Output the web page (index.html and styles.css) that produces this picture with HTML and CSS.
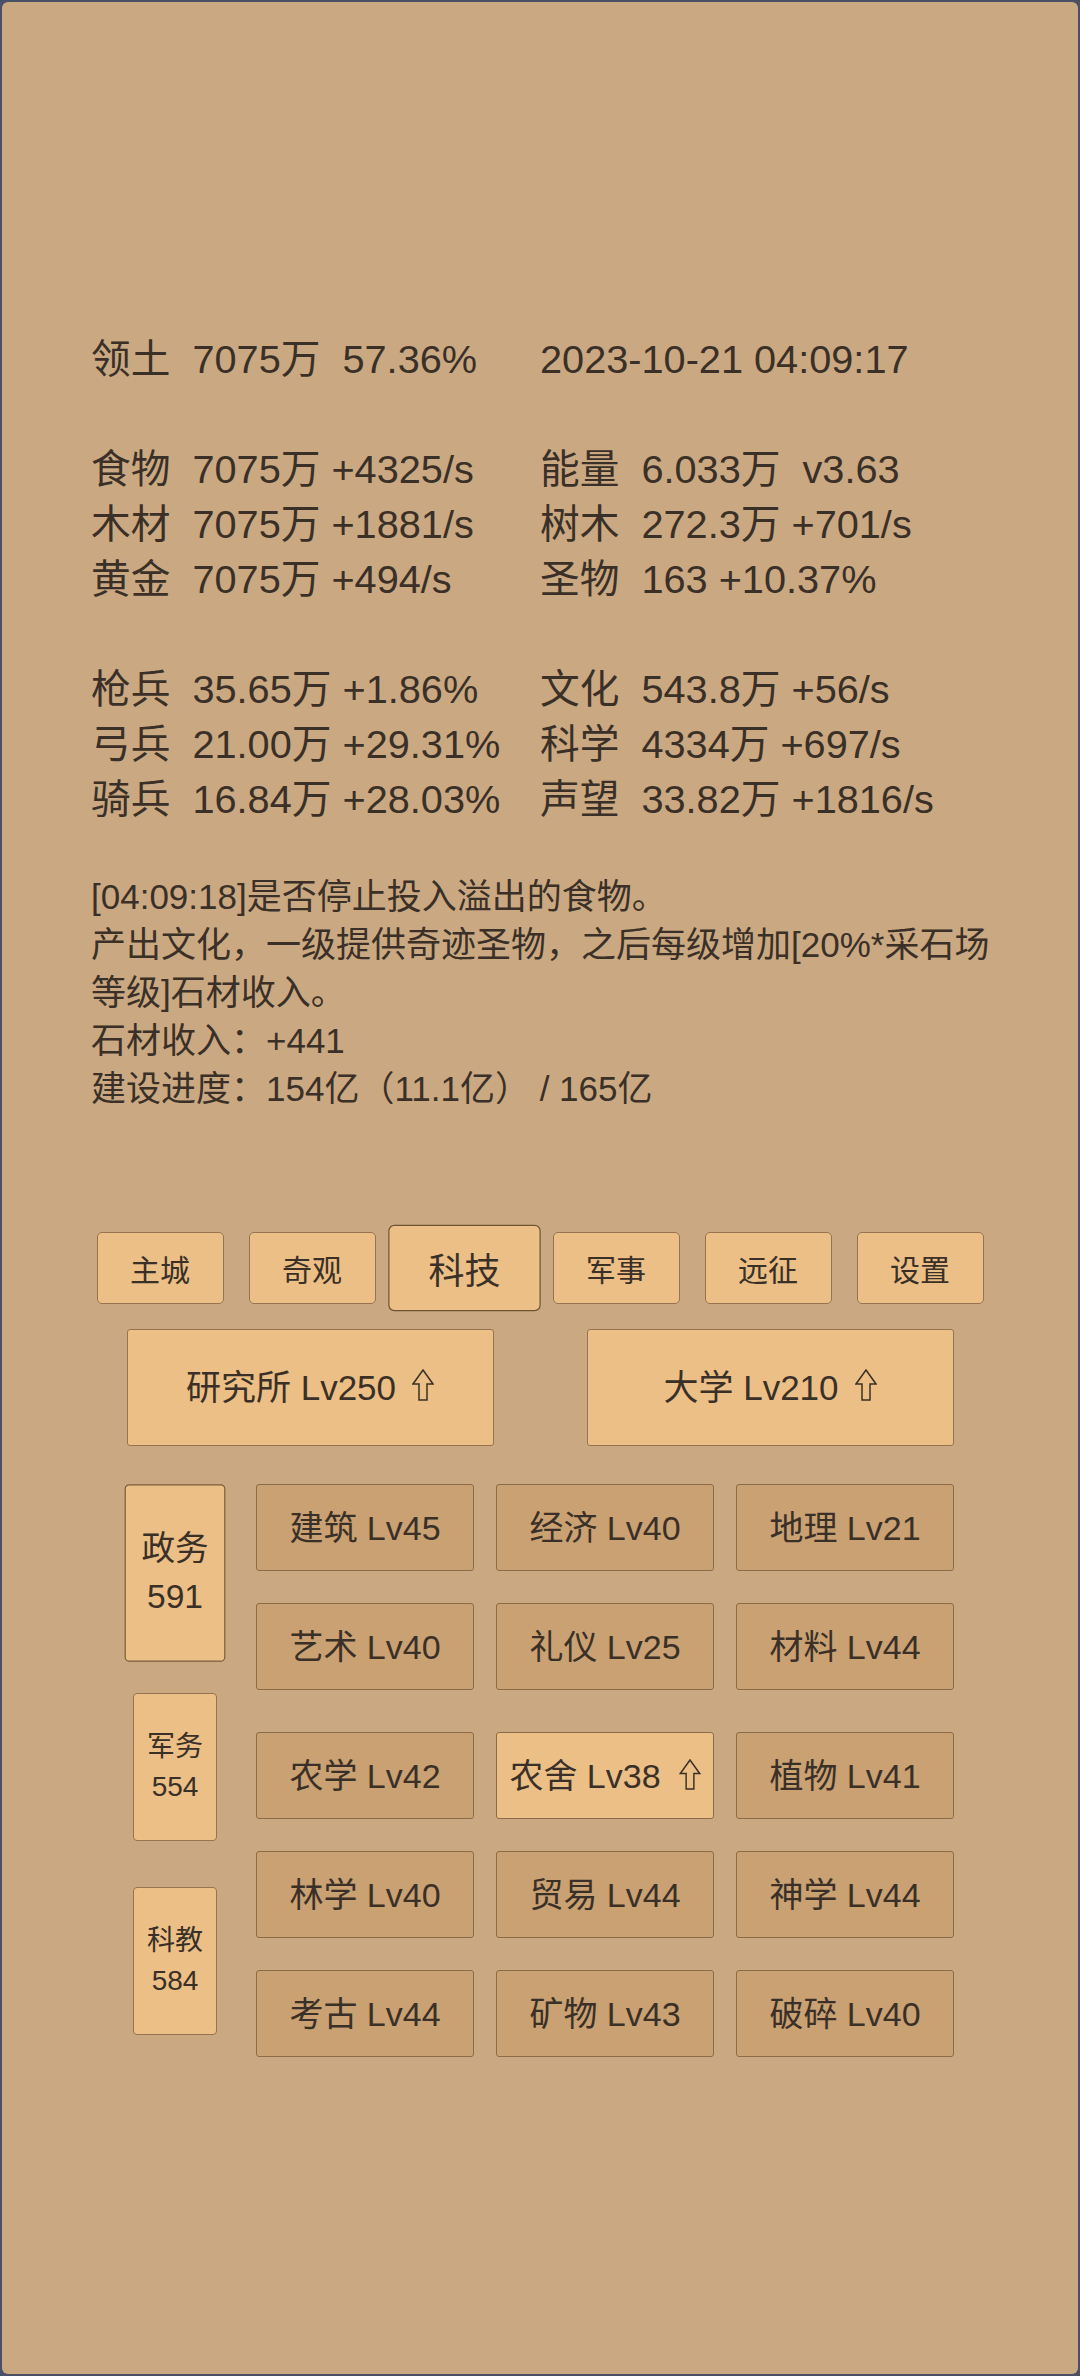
FILE: index.html
```html
<!DOCTYPE html>
<html lang="zh-CN">
<head>
<meta charset="utf-8">
<title>科技</title>
<link rel="stylesheet" href="styles.css">
</head>
<body>
<div class="app">
  <div class="content">
    <section class="stats">
      <div class="block">
        <div class="row"><span class="col">领土  7075万  57.36%</span><span class="col">2023-10-21 04:09:17</span></div>
      </div>
      <div class="block">
        <div class="row"><span class="col">食物  7075万 +4325/s</span><span class="col">能量  6.033万  v3.63</span></div>
        <div class="row"><span class="col">木材  7075万 +1881/s</span><span class="col">树木  272.3万 +701/s</span></div>
        <div class="row"><span class="col">黄金  7075万 +494/s</span><span class="col">圣物  163 +10.37%</span></div>
      </div>
      <div class="block">
        <div class="row"><span class="col">枪兵  35.65万 +1.86%</span><span class="col">文化  543.8万 +56/s</span></div>
        <div class="row"><span class="col">弓兵  21.00万 +29.31%</span><span class="col">科学  4334万 +697/s</span></div>
        <div class="row"><span class="col">骑兵  16.84万 +28.03%</span><span class="col">声望  33.82万 +1816/s</span></div>
      </div>
    </section>
    <section class="msg">
      <p>[04:09:18]是否停止投入溢出的食物。</p>
      <p>产出文化，一级提供奇迹圣物，之后每级增加[20%*采石场等级]石材收入。</p>
      <p>石材收入：+441</p>
      <p>建设进度：154亿（11.1亿） / 165亿</p>
    </section>
  </div>

  <nav class="tabs">
    <div class="tab">主城</div>
    <div class="tab">奇观</div>
    <div class="tab active">科技</div>
    <div class="tab">军事</div>
    <div class="tab">远征</div>
    <div class="tab">设置</div>
  </nav>

  <div class="halls">
    <div class="hall"><span>研究所 Lv250<svg class="up" viewBox="0 0 22 32" width="22" height="32"><path d="M11 1 L21 15 L15 15 L15 31 L7 31 L7 15 L1 15 Z"/></svg></span></div>
    <div class="hall"><span>大学 Lv210<svg class="up" viewBox="0 0 22 32" width="22" height="32"><path d="M11 1 L21 15 L15 15 L15 31 L7 31 L7 15 L1 15 Z"/></svg></span></div>
  </div>

  <div class="tech">
    <div class="cats">
      <div class="cat active">政务<br>591</div>
      <div class="cat">军务<br>554</div>
      <div class="cat">科教<br>584</div>
    </div>
    <div class="grid">
      <div class="grow">
        <div class="cell">建筑 Lv45</div>
        <div class="cell">经济 Lv40</div>
        <div class="cell">地理 Lv21</div>
      </div>
      <div class="grow">
        <div class="cell">艺术 Lv40</div>
        <div class="cell">礼仪 Lv25</div>
        <div class="cell">材料 Lv44</div>
      </div>
      <div class="grow wide">
        <div class="cell">农学 Lv42</div>
        <div class="cell lit"><span>农舍 Lv38<svg class="up small" viewBox="0 0 22 32" width="22" height="31"><path d="M11 1 L21 15 L15 15 L15 31 L7 31 L7 15 L1 15 Z"/></svg></span></div>
        <div class="cell">植物 Lv41</div>
      </div>
      <div class="grow">
        <div class="cell">林学 Lv40</div>
        <div class="cell">贸易 Lv44</div>
        <div class="cell">神学 Lv44</div>
      </div>
      <div class="grow">
        <div class="cell">考古 Lv44</div>
        <div class="cell">矿物 Lv43</div>
        <div class="cell">破碎 Lv40</div>
      </div>
    </div>
  </div>
</div>
</body>
</html>
```

FILE: styles.css
```css
html {
  background: #4a5068;
}
body {
  margin: 0;
  font-family: "Liberation Sans", "Noto Sans CJK SC", "DejaVu Sans", sans-serif;
  color: #3a3027;
}
.app {
  margin: 2px;
  height: 2372px;
  box-sizing: border-box;
  border-radius: 6px;
  background: #caa982;
  padding-top: 330px;
  overflow: hidden;
}
.content {
  padding: 0 89px;
}
.stats {
  font-size: 39.7px;
  line-height: 55px;
}
.block + .block {
  margin-top: 55px;
}
.row {
  display: flex;
}
.col {
  width: 449px;
  white-space: pre;
}
.msg {
  margin-top: 46px;
  margin-right: -20px;
  font-size: 35px;
  line-height: 48px;
}
.msg p {
  margin: 0;
}
.tabs {
  margin-top: 119px;
  display: flex;
  justify-content: center;
  gap: 25px;
}
.tab {
  width: 127px;
  height: 72px;
  box-sizing: border-box;
  display: flex;
  align-items: center;
  justify-content: center;
  font-size: 30px;
  background: #ebbf86;
  border: 1px solid #957550;
  border-radius: 5px;
}
.tab.active {
  transform: scale(1.2);
  border-color: #6e5335;
}
.halls {
  margin-top: 25px;
  display: flex;
  justify-content: center;
  gap: 93px;
}
.hall {
  width: 367px;
  height: 117px;
  box-sizing: border-box;
  display: flex;
  align-items: center;
  justify-content: center;
  font-size: 35px;
  line-height: 40px;
  background: #ebbf86;
  border: 1px solid #957550;
  border-radius: 3px;
}
.up {
  display: inline-block;
  vertical-align: -1px;
  margin-left: 16px;
  fill: none;
  stroke: #3a3027;
  stroke-width: 1.5;
}
.up.small {
  margin-left: 18px;
  vertical-align: -2px;
}
.tech {
  margin-top: 38px;
  display: flex;
  padding-left: 131px;
  gap: 39px;
}
.cats {
  width: 84px;
  display: flex;
  flex-direction: column;
  justify-content: center;
  gap: 46px;
  padding-bottom: 8px;
}
.cat {
  height: 148px;
  box-sizing: border-box;
  display: flex;
  align-items: center;
  justify-content: center;
  text-align: center;
  font-size: 28px;
  line-height: 40px;
  background: #ebbf86;
  border: 1px solid #957550;
  border-radius: 4px;
}
.cat.active {
  transform: scale(1.2);
  border-color: #7a5c3a;
}
.grid {
  display: flex;
  flex-direction: column;
  gap: 32px;
}
.grow {
  display: flex;
  gap: 22px;
}
.grow.wide {
  margin-top: 10px;
}
.cell {
  width: 218px;
  height: 87px;
  box-sizing: border-box;
  display: flex;
  align-items: center;
  justify-content: center;
  font-size: 34px;
  line-height: 40px;
  background: #c9a172;
  border: 1px solid #8c6c48;
  border-radius: 3px;
}
.cell.lit {
  background: #ebbf86;
}
```
